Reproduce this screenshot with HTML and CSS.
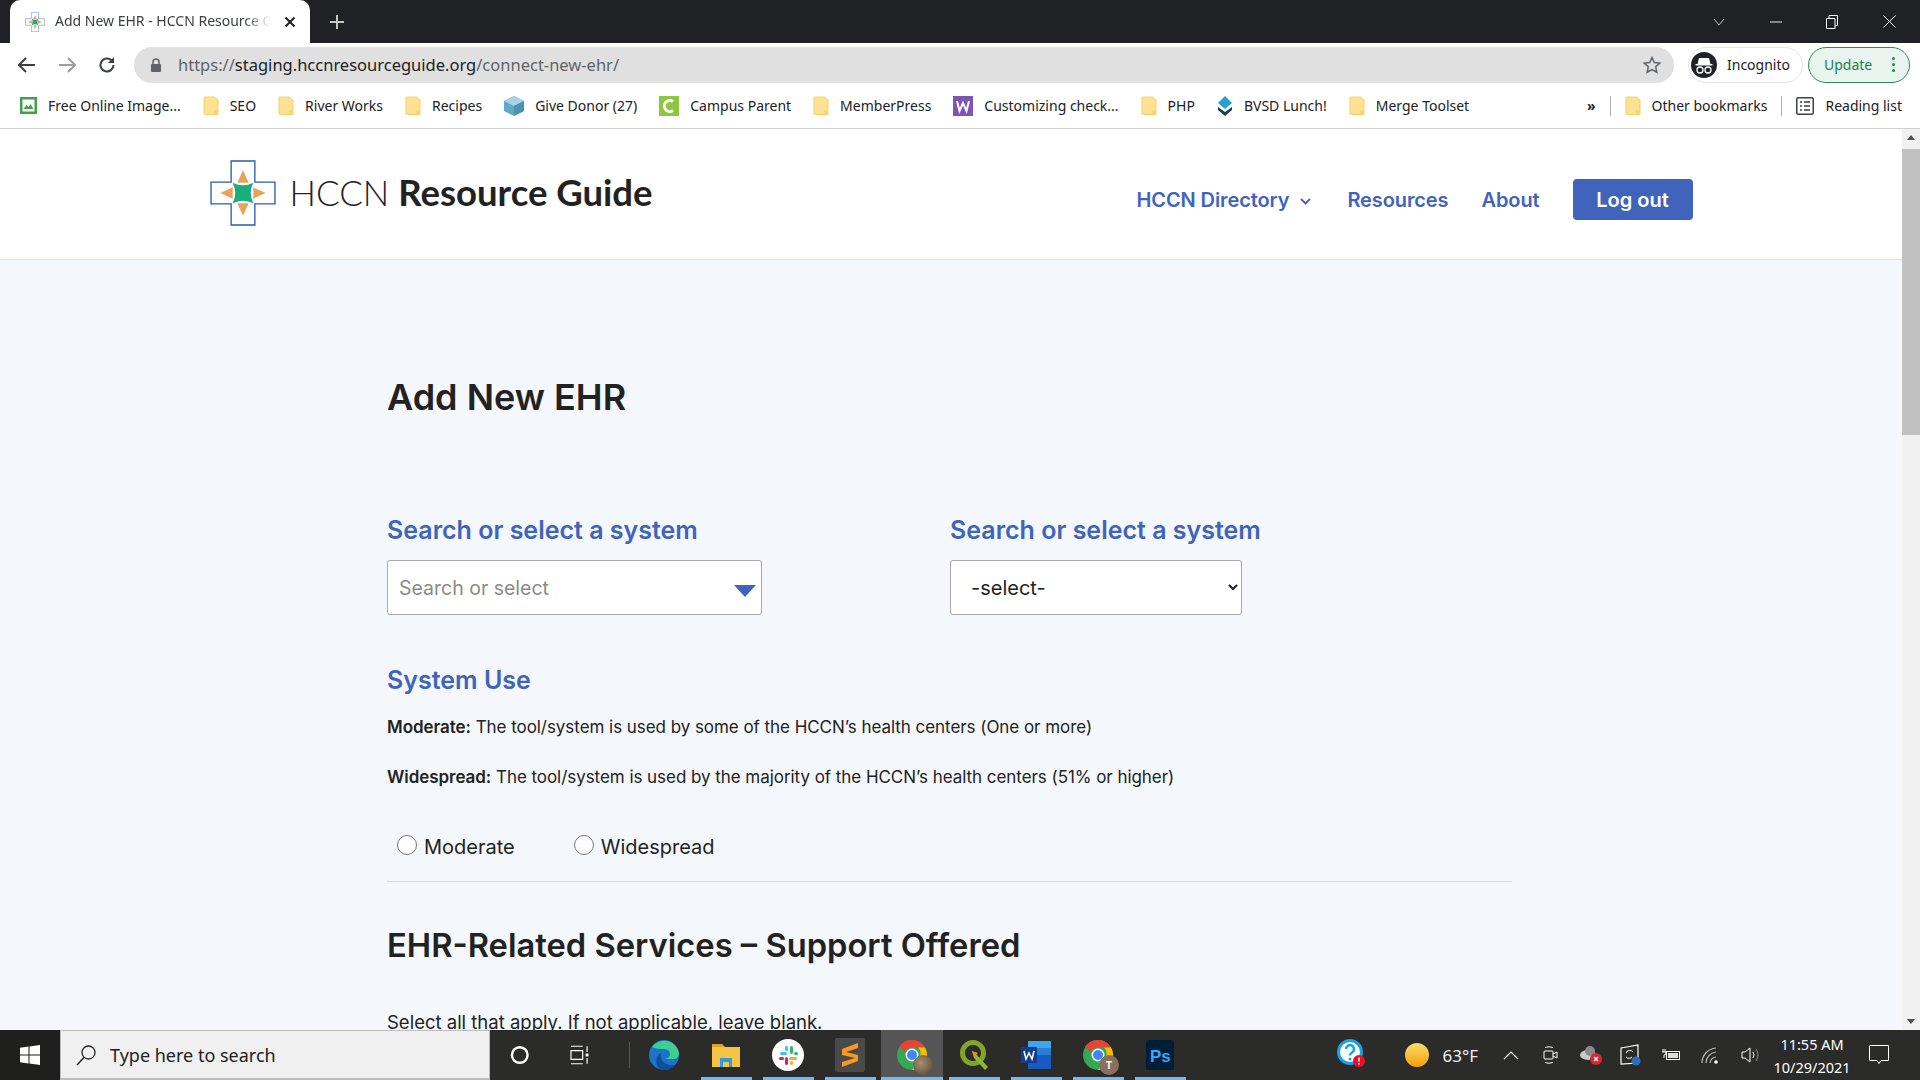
FILE: index.html
```html
<!DOCTYPE html>
<html lang="en">
<head>
  <meta charset="UTF-8" />
  <title>Add New EHR - HCCN Resource Guide</title>
  <link rel="stylesheet" href="styles.css">
</head>
<body>
  <svg class="defs" width="0" height="0">
    <symbol id="folder" viewBox="0 0 16 20">
      <path d="M1 1h10.500l3.500 3v14.500H2.500a1.500 1.500 0 0 1-1.500-1.500z" fill="#fde293" stroke="#f5d06c" stroke-width="1"/>
      <path d="M11 14h4v4.500h-4z" fill="#f7d774"/>
    </symbol>
    <symbol id="logo" viewBox="0 0 64 64">
      <path d="M20.500 1h23v20.500H63v21H43.500V63h-23V42.500H1v-21h19.500z" fill="#fff" stroke="#2a5bb5" stroke-width="1.300"/>
      <path d="M32 10l5.500 12h-11zM32 54l-5.500-12h11zM10 32l12-5.500v11zM54 32l-12 5.500v-11z" fill="#e8a35a"/>
      <path d="M22 22q10 5 20 0q-5 10 0 20q-10-5-20 0q5-10 0-20z" fill="#17b07b"/>
    </symbol>
    <symbol id="chrome" viewBox="0 0 32 32">
      <circle cx="16" cy="16" r="15" fill="#34a853"/>
      <path d="M16 1a15 15 0 0 1 13 7.500H16a7.500 7.500 0 0 0-7 4.500L3 8a15 15 0 0 1 13-7z" fill="#ea4335"/>
      <path d="M29 8.500A15 15 0 0 1 16 31l6.500-11.500A7.500 7.500 0 0 0 22 8.500z" fill="#fbbc05"/>
      <circle cx="16" cy="16" r="6.500" fill="#fff"/>
      <circle cx="16" cy="16" r="5" fill="#4285f4"/>
    </symbol>
  </svg>

  <div class="tabstrip">
    <div class="tab">
      <svg class="favicon" width="20" height="20"><use href="#logo"/></svg>
      <span class="tab-title">Add New EHR - HCCN Resource Guide</span>
      <svg class="tab-close" width="12" height="12" viewBox="0 0 12 12"><path d="M1.500 1.500l9 9M10.500 1.500l-9 9" stroke="#202124" stroke-width="2"/></svg>
    </div>
    <svg class="tab-new" width="16" height="16" viewBox="0 0 16 16"><path d="M8 1v14M1 8h14" stroke="#c4c7c5" stroke-width="2"/></svg>
    <div class="win-controls">
      <svg width="12" height="8" viewBox="0 0 12 8"><path d="M1 1l5 6 5-6" fill="none" stroke="#bdc1c6"/></svg>
      <svg width="12" height="2" viewBox="0 0 12 2"><path d="M0 1h12" stroke="#e8eaed"/></svg>
      <svg width="12" height="14" viewBox="0 0 12 14"><path d="M.5 3.500h8.500v10H.5zM3 3.500V.5h8.500v10H9" fill="none" stroke="#fff"/></svg>
      <svg width="13" height="13" viewBox="0 0 13 13"><path d="M.5.500l12 12M12.500.500l-12 12" stroke="#fff"/></svg>
    </div>
  </div>

  <div class="toolbar">
    <svg width="18" height="16" viewBox="0 0 18 16"><path d="M8 1L1 8l7 7M1 8h16" fill="none" stroke="#3c4043" stroke-width="2"/></svg>
    <svg width="18" height="16" viewBox="0 0 18 16"><path d="M10 1l7 7-7 7M17 8H1" fill="none" stroke="#9aa0a6" stroke-width="2"/></svg>
    <svg width="18" height="18" viewBox="0 0 18 18"><path d="M15.500 9A6.500 6.500 0 1 1 13.500 4.300" fill="none" stroke="#3c4043" stroke-width="2"/><path d="M16 1v6h-6z" fill="#3c4043"/></svg>
    <div class="urlbar">
      <svg width="12" height="14" viewBox="0 0 12 14"><path d="M3 6V4a3 3 0 0 1 6 0v2" fill="none" stroke="#5f6368" stroke-width="1.500"/><rect x="1" y="6" width="10" height="8" rx="1" fill="#5f6368"/></svg>
      <span class="url"><span class="url-dim">https://</span>staging.hccnresourceguide.org<span class="url-dim">/connect-new-ehr/</span></span>
      <svg class="url-star" width="18" height="18" viewBox="0 0 18 18"><path d="M9 1.500l2.300 5 5.400.600-4 3.700 1.100 5.400L9 13.500l-4.800 2.700 1.100-5.400-4-3.700 5.400-.600z" fill="none" stroke="#5f6368" stroke-width="1.500"/></svg>
    </div>
    <div class="pill-incognito">
      <svg width="26" height="26" viewBox="0 0 26 26"><circle cx="13" cy="13" r="13" fill="#202124"/><path d="M8 6h10l1.500 6h-13zM4.500 12h17v1.500h-17z" fill="#fff"/><circle cx="9" cy="18" r="3" fill="none" stroke="#fff" stroke-width="1.300"/><circle cx="17" cy="18" r="3" fill="none" stroke="#fff" stroke-width="1.300"/></svg>
      <span>Incognito</span>
    </div>
    <div class="pill-update">
      <span>Update</span>
      <span class="update-dots"><i></i><i></i><i></i></span>
    </div>
  </div>

  <div class="bookmarks">
    <a class="bm"><svg width="17" height="17" viewBox="0 0 17 17"><rect width="17" height="17" fill="#43a047"/><rect x="2.500" y="2.500" width="12" height="12" fill="#fff"/><path d="M3.500 12l3-4 2 2 2-3 3 5z" fill="#43a047"/></svg>Free Online Image...</a>
    <a class="bm"><svg width="16" height="20"><use href="#folder"/></svg>SEO</a>
    <a class="bm"><svg width="16" height="20"><use href="#folder"/></svg>River Works</a>
    <a class="bm"><svg width="16" height="20"><use href="#folder"/></svg>Recipes</a>
    <a class="bm"><svg width="20" height="20" viewBox="0 0 20 20"><path d="M10 0l10 5v10l-10 5L0 15V5z" fill="#5fa9c9"/><path d="M10 0l10 5-10 5L0 5z" fill="#a6d3e6"/><path d="M10 10l10-5v10l-10 5z" fill="#4b93b3"/></svg>Give Donor (27)</a>
    <a class="bm"><svg width="20" height="20" viewBox="0 0 20 20"><rect width="20" height="20" fill="#8dc63f"/><path d="M14 5.500a5.500 5.500 0 1 0 0 9" fill="none" stroke="#fff" stroke-width="3"/></svg>Campus Parent</a>
    <a class="bm"><svg width="16" height="20"><use href="#folder"/></svg>MemberPress</a>
    <a class="bm"><svg width="20" height="20" viewBox="0 0 20 20"><rect width="20" height="20" fill="#7f54b3"/><path d="M4 5l2.500 10L10 7l3.500 8L16 5" fill="none" stroke="#fff" stroke-width="2"/></svg>Customizing check...</a>
    <a class="bm"><svg width="16" height="20"><use href="#folder"/></svg>PHP</a>
    <a class="bm"><svg width="16" height="20" viewBox="0 0 16 20"><path d="M8 0l7 7-7 6-7-6z" fill="#2a9fd6"/><path d="M1 11l7 5 7-5v3l-7 6-7-6z" fill="#1c3d5a"/></svg>BVSD Lunch!</a>
    <a class="bm"><svg width="16" height="20"><use href="#folder"/></svg>Merge Toolset</a>
    <div class="bm-right">
      <span class="bm-more">»</span>
      <span class="bm-sep"></span>
      <a class="bm"><svg width="16" height="20"><use href="#folder"/></svg>Other bookmarks</a>
      <span class="bm-sep"></span>
      <a class="bm"><svg width="18" height="18" viewBox="0 0 18 18"><rect x=".75" y=".75" width="16.500" height="16.500" rx="1.500" fill="none" stroke="#3c4043" stroke-width="1.500"/><path d="M4 5h2M4 9h2M4 13h2M8 5h6M8 9h6M8 13h6" stroke="#3c4043" stroke-width="1.500"/></svg>Reading list</a>
    </div>
  </div>

  <div class="viewport">
    <div class="page">
      <header class="site-header">
        <div class="site-header-inner">
          <a class="brand">
            <svg width="66" height="66"><use href="#logo"/></svg>
            <span class="brand-text"><span class="brand-light">HCCN</span> <strong>Resource Guide</strong></span>
          </a>
          <nav class="nav">
            <a class="nav-dropdown">HCCN Directory<svg class="nav-chevron" width="11" height="7" viewBox="0 0 11 7"><path d="M1 1l4.500 4.500L10 1" fill="none" stroke="#4064bb" stroke-width="1.800"/></svg></a>
            <a>Resources</a>
            <a>About</a>
            <button class="btn-logout">Log out</button>
          </nav>
        </div>
      </header>

      <main class="content">
        <h1>Add New EHR</h1>

        <div class="system-row">
          <div class="system-col">
            <h3>Search or select a system</h3>
            <div class="combo">
              <input type="text" placeholder="Search or select" />
              <span class="combo-arrow"></span>
            </div>
          </div>
          <div class="system-col">
            <h3>Search or select a system</h3>
            <select class="system-select">
              <option>-select-</option>
            </select>
          </div>
        </div>

        <h3 class="use-title">System Use</h3>
        <p><strong>Moderate:</strong> The tool/system is used by some of the HCCN’s health centers (One or more)</p>
        <p><strong>Widespread:</strong> The tool/system is used by the majority of the HCCN’s health centers (51% or higher)</p>

        <div class="radios">
          <label><input type="radio" name="use" /> Moderate</label>
          <label><input type="radio" name="use" /> Widespread</label>
        </div>
        <hr />

        <h2>EHR-Related Services – Support Offered</h2>
        <p class="hint">Select all that apply. If not applicable, leave blank.</p>
      </main>
    </div>
    <div class="scrollbar">
      <span class="sb-up"></span>
      <span class="sb-thumb"></span>
      <span class="sb-down"></span>
    </div>
  </div>

  <footer class="taskbar">
    <div class="start">
      <svg width="20" height="20" viewBox="0 0 20 20"><path d="M0 2.800l8.500-1.200v8H0zM9.500 1.400L20 0v9.600H9.500zM0 10.500h8.500v8L0 17.300zM9.500 10.500H20V20L9.500 18.600z" fill="#fff"/></svg>
    </div>
    <div class="task-search">
      <svg width="22" height="22" viewBox="0 0 22 22"><circle cx="13.500" cy="8.500" r="6.500" fill="none" stroke="#222" stroke-width="1.300"/><path d="M9 13.500L2 21" stroke="#222" stroke-width="1.500"/></svg>
      <span>Type here to search</span>
    </div>
    <div class="task-sys">
      <svg width="20" height="20" viewBox="0 0 20 20"><circle cx="10" cy="10" r="8" fill="none" stroke="#fff" stroke-width="2.500"/></svg>
      <svg width="20" height="20" viewBox="0 0 20 20"><path d="M1 1h12M1 19h12M1 5.500h12v9H1zM17.500 1v6M17.500 13v6" fill="none" stroke="#fff" stroke-width="1.200"/><rect x="16" y="8.500" width="3" height="3" fill="#fff"/></svg>
      <span class="task-sep"></span>
    </div>
    <div class="task-edge">
      <svg width="32" height="32" viewBox="0 0 32 32"><circle cx="16" cy="16" r="15" fill="#1b74c9"/><path d="M4 8A15 15 0 0 1 31 14q0 6-6 6H17q5-1 5-5 0-5-7-5-7 0-11-2z" fill="#3fce8f"/><path d="M14 31C7 28 6 18 13 14q-2 9 8 12 4 1 7-1-5 7-14 6z" fill="#104e99"/></svg>
    </div>
    <div class="task-apps">
      <div class="app on">
        <svg width="30" height="28" viewBox="0 0 30 28"><path d="M1 3h10l3 3h15v20H1z" fill="#f6c445"/><path d="M1 3h10l2 3H1z" fill="#e0a225"/><path d="M9 17h12v9h-3v-5h-6v5H9z" fill="#2f9ae8"/></svg>
      </div>
      <div class="app on">
        <svg width="32" height="32" viewBox="0 0 32 32"><circle cx="16" cy="16" r="16" fill="#fff"/><rect x="8" y="13" width="7" height="3" rx="1.500" fill="#36c5f0"/><rect x="13" y="7" width="3" height="5" rx="1.500" fill="#36c5f0"/><rect x="18" y="7" width="3" height="8" rx="1.500" fill="#2eb67d"/><rect x="22" y="13" width="4" height="3" rx="1.500" fill="#2eb67d"/><rect x="17" y="18" width="8" height="3" rx="1.500" fill="#ecb22e"/><rect x="18" y="22" width="3" height="4" rx="1.500" fill="#ecb22e"/><rect x="13" y="18" width="3" height="8" rx="1.500" fill="#e01e5a"/><rect x="7" y="18" width="5" height="3" rx="1.500" fill="#e01e5a"/></svg>
      </div>
      <div class="app on">
        <svg width="30" height="34" viewBox="0 0 30 34"><rect width="30" height="34" rx="2" fill="#4a4a4a"/><path d="M23 5L7 11v6l13 3-13 4v5l16-6v-6L11 14l12-4z" fill="#f89820"/></svg>
      </div>
      <div class="app on active">
        <svg width="32" height="32"><use href="#chrome"/></svg>
        <span class="profile-badge badge-photo"></span>
      </div>
      <div class="app on">
        <svg width="30" height="32" viewBox="0 0 30 32"><circle cx="14" cy="14" r="10.500" fill="none" stroke="#7fa727" stroke-width="5"/><path d="M13 12l4 3 12 13-3 3-11-12z" fill="#8cb63c"/><path d="M13 12l6 2-4 4z" fill="#f08a24"/></svg>
      </div>
      <div class="app on">
        <svg width="30" height="30" viewBox="0 0 30 30"><path d="M7 1h23v28H7z" fill="#185abd"/><path d="M7 1h23v7H7z" fill="#41a5ee"/><path d="M7 8h23v7H7z" fill="#2b7cd3"/><rect y="7" width="16" height="16" rx="1" fill="#103f91"/><path d="M3 11l2 8 3-6 3 6 2-8" fill="none" stroke="#fff" stroke-width="1.500"/></svg>
      </div>
      <div class="app on">
        <svg width="32" height="32"><use href="#chrome"/></svg>
        <span class="profile-badge">T</span>
      </div>
      <div class="app on">
        <svg width="28" height="30" viewBox="0 0 28 30"><rect width="28" height="30" rx="3" fill="#001e36"/><text x="4" y="22" font-family="Liberation Sans, sans-serif" font-size="17" font-weight="700" fill="#31a8ff">Ps</text></svg>
      </div>
    </div>

    <div class="tray">
      <div class="tray-help">
        <svg width="28" height="28" viewBox="0 0 28 28"><circle cx="13" cy="13" r="11.500" fill="#fff" stroke="#1ba1e2" stroke-width="3"/><path d="M9 10a4 4 0 1 1 6 3.500q-2 1-2 3" fill="none" stroke="#1ba1e2" stroke-width="2.500"/><circle cx="13" cy="20" r="1.500" fill="#1ba1e2"/><circle cx="22" cy="22" r="6" fill="#e81123"/><path d="M22 18.500v4M22 24v1.500" stroke="#fff" stroke-width="1.500"/></svg>
      </div>
      <svg class="tray-sun" width="24" height="24" viewBox="0 0 24 24"><defs><linearGradient id="sun" x1="0" y1="0" x2="0" y2="1"><stop offset="0" stop-color="#f8dd6c"/><stop offset="1" stop-color="#f59e0b"/></linearGradient></defs><circle cx="12" cy="12" r="12" fill="url(#sun)"/></svg>
      <span class="tray-temp">63°F</span>
      <div class="tray-icons">
        <svg width="16" height="10" viewBox="0 0 16 10"><path d="M1 9l7-7 7 7" fill="none" stroke="#fff" stroke-width="1.200"/></svg>
        <svg width="16" height="18" viewBox="0 0 16 18"><path d="M2 1.500q4-1.500 8 0M2 16.500q4 1.500 8 0" fill="none" stroke="#fff"/><rect x="1" y="5" width="9" height="8" rx="1" fill="none" stroke="#fff"/><path d="M10 8l4-2v6l-4-2" fill="none" stroke="#fff"/></svg>
        <svg width="24" height="20" viewBox="0 0 24 20"><ellipse cx="9" cy="10" rx="8" ry="5" fill="#c9c9c9"/><circle cx="11" cy="6" r="5" fill="#8a8a8a"/><circle cx="17" cy="14" r="6" fill="#d92632"/><path d="M15 12l4 4M19 12l-4 4" stroke="#fff" stroke-width="1.300"/></svg>
        <svg width="22" height="22" viewBox="0 0 22 22"><path d="M1 4l17-3v18l-17 1z" fill="none" stroke="#fff" stroke-width="1.200"/><path d="M6 9a4 4 0 0 1 7-1M12 13a4 4 0 0 1-6 0" fill="none" stroke="#fff"/><circle cx="16" cy="17" r="4.500" fill="#2a6fbb"/></svg>
        <svg width="20" height="14" viewBox="0 0 20 14"><rect x="5.500" y="3.500" width="13" height="8" fill="none" stroke="#fff"/><rect x="7" y="5" width="10" height="5" fill="#ddd"/><path d="M2 1v3M4 1v3M1 4h4v2l-2 1v3" fill="none" stroke="#fff"/></svg>
        <svg width="20" height="18" viewBox="0 0 20 18"><path d="M1 17A15 15 0 0 1 15 2M5 17A11 11 0 0 1 15 6M9 17a7 7 0 0 1 6-6" fill="none" stroke="#bbb" stroke-width="1.200"/><circle cx="15" cy="16" r="1.800" fill="#fff"/></svg>
        <svg width="20" height="18" viewBox="0 0 20 18"><path d="M1 6h3l5-4v14l-5-4H1z" fill="none" stroke="#fff"/><path d="M12 6q2 3 0 6" fill="none" stroke="#fff"/><path d="M15 3q4 6 0 12" fill="none" stroke="#888"/></svg>
      </div>
      <div class="clock"><span>11:55 AM</span><span>10/29/2021</span></div>
      <svg class="tray-note" width="20" height="20" viewBox="0 0 20 20"><path d="M.5.500h19v15H12l-2 3-2-3H.5z" fill="none" stroke="#fff"/></svg>
    </div>
  </footer>
</body>
</html>
```

FILE: styles.css
```css
* {
  box-sizing: border-box;
}

html, body {
  margin: 0;
  height: 100%;
  overflow: hidden;
}

body {
  display: flex;
  flex-direction: column;
  width: 1920px;
  height: 1080px;
  font-family: "Noto Sans", sans-serif;
  background: #f4f7fc;
}

.defs {
  position: absolute;
}

/* Ventana del navegador */
.tabstrip {
  height: 43px;
  flex: none;
  display: flex;
  align-items: center;
  background: #202124;
  padding-left: 10px;
}

.tab {
  width: 300px;
  height: 43px;
  display: flex;
  align-items: center;
  background: #fff;
  border-radius: 10px 10px 0 0;
  padding: 0 14px 0 15px;
  color: #3c4043;
  font-size: 14px;
  white-space: nowrap;
}

.tab-title {
  width: 216px;
  margin-left: 10px;
  padding-bottom: 2px;
  overflow: hidden;
  -webkit-mask-image: linear-gradient(to right, #000 88%, transparent 100%);
  mask-image: linear-gradient(to right, #000 88%, transparent 100%);
}

.tab-close {
  margin-left: auto;
}

.tab-new {
  margin-left: 19px;
}

.win-controls {
  margin-left: auto;
  display: flex;
  align-items: center;
  justify-content: space-between;
  width: 183px;
  margin-right: 24px;
}

.toolbar {
  height: 43px;
  flex: none;
  display: flex;
  align-items: center;
  gap: 22px;
  padding-left: 18px;
  background: #fff;
}

.urlbar {
  width: 1540px;
  height: 36px;
  margin-left: -4px;
  display: flex;
  align-items: center;
  gap: 16px;
  padding: 0 13px 0 16px;
  background: #e0e0e0;
  border-radius: 18px;
  font-size: 16.500px;
}

.url {
  color: #202124;
}

.url-dim {
  color: #5f6368;
}

.url-star {
  margin-left: auto;
}

.pill-incognito {
  width: 115px;
  height: 36px;
  margin-left: -8px;
  display: flex;
  align-items: center;
  gap: 10px;
  padding-left: 2px;
  border: 1px solid #e4e4e4;
  border-radius: 18px;
  font-size: 14px;
  color: #202124;
}

.pill-update {
  width: 102px;
  height: 36px;
  margin-left: -17px;
  display: flex;
  align-items: center;
  justify-content: space-between;
  padding: 0 14px 0 15px;
  border: 1.500px solid #2e8b57;
  border-radius: 18px;
  background: #eaf4ee;
  color: #1e7e45;
  font-size: 14px;
}

.update-dots {
  display: flex;
  flex-direction: column;
  gap: 3px;
}

.update-dots i {
  width: 3px;
  height: 3px;
  border-radius: 50%;
  background: #1e8e3e;
}

.bookmarks {
  height: 43px;
  flex: none;
  display: flex;
  align-items: center;
  gap: 22px;
  padding: 0 18px 3px 20px;
  background: #fff;
  border-bottom: 1px solid #d0d0d0;
  font-size: 14px;
  color: #202124;
}

.bm {
  display: flex;
  align-items: center;
  gap: 11px;
  white-space: nowrap;
}

.bm-right {
  margin-left: auto;
  display: flex;
  align-items: center;
  gap: 14px;
}

.bm-more {
  font-weight: 700;
}

.bm-sep {
  width: 1px;
  height: 20px;
  background: #b0b0b0;
}

/* Pagina */
.viewport {
  flex: 1;
  min-height: 0;
  display: flex;
}

.page {
  flex: 1;
  overflow: hidden;
}

.scrollbar {
  width: 18px;
  display: flex;
  flex-direction: column;
  align-items: center;
  background: #f1f1f1;
}

.sb-up, .sb-down {
  width: 0;
  height: 0;
  border-left: 4px solid transparent;
  border-right: 4px solid transparent;
  margin: 6px 0;
}

.sb-up {
  border-bottom: 5px solid #505050;
}

.sb-down {
  border-top: 5px solid #505050;
  margin-top: auto;
}

.sb-thumb {
  width: 100%;
  height: 286px;
  margin-top: 3px;
  background: #c1c1c1;
}

.site-header {
  height: 131px;
  background: #fff;
  border-bottom: 1px solid #dde3ea;
}

.site-header-inner {
  width: 1483px;
  margin: 0 auto;
  height: 100%;
  display: flex;
  align-items: center;
  justify-content: space-between;
}

.brand {
  display: flex;
  align-items: center;
  gap: 14px;
  margin-top: -2px;
}

.brand-text {
  margin-top: -3px;
  font-family: Lato, sans-serif;
  font-size: 35px;
  color: #222;
}

.brand-light {
  font-weight: 300;
}

.brand-text strong {
  font-size: 36.500px;
  font-weight: 700;
}

.nav {
  display: flex;
  align-items: center;
  gap: 33px;
  margin-top: 11px;
  font-family: Inter, sans-serif;
  font-size: 20px;
  font-weight: 600;
  letter-spacing: -0.1px;
  color: #4064bb;
}

.nav-dropdown {
  margin-right: 3px;
}

.nav-chevron {
  margin-left: 11px;
  vertical-align: 2px;
}

.btn-logout {
  width: 120px;
  height: 41px;
  background: #4064bb;
  color: #fff;
  border: none;
  border-radius: 4px;
  font: inherit;
}

.content {
  width: 1125px;
  margin-left: 387px;
  font-family: Inter, sans-serif;
  color: #222;
}

h1 {
  margin: 0;
  padding-top: 113px;
  font-size: 36px;
  line-height: 48px;
  font-weight: 600;
}

.system-row {
  display: flex;
  gap: 188px;
  margin-top: 92px;
}

.system-col h3, .use-title {
  margin: 0;
  font-size: 25px;
  line-height: 34px;
  font-weight: 600;
  color: #4064bb;
}

.combo {
  position: relative;
  width: 375px;
  margin-top: 13px;
}

.combo input {
  width: 100%;
  height: 55px;
  padding: 0 11px;
  border: 1px solid #a9a9a9;
  border-radius: 3px;
  background: #fff;
  font: 19.500px Inter, sans-serif;
}

.combo input::placeholder {
  color: #8a8a8a;
}

.combo-arrow {
  position: absolute;
  right: 6px;
  top: 25px;
  border-left: 11px solid transparent;
  border-right: 11px solid transparent;
  border-top: 12px solid #4064bb;
}

.system-select {
  display: block;
  width: 292px;
  height: 55px;
  margin-top: 13px;
  padding: 0 16px;
  border: 1px solid #a9a9a9;
  border-radius: 3px;
  background: #fff;
  color: #222;
  font: 20px Inter, sans-serif;
}

.use-title {
  margin-top: 48px;
}

p {
  margin: 0;
  font-size: 17px;
  line-height: 26px;
  letter-spacing: -0.05px;
}

.use-title + p {
  margin-top: 17px;
}

.use-title + p + p {
  margin-top: 24px;
}

p strong {
  font-weight: 600;
}

.radios {
  display: flex;
  gap: 59px;
  margin-top: 43px;
  padding-left: 10px;
  font-size: 20px;
  line-height: 28px;
}

.radios label {
  display: flex;
  align-items: center;
  gap: 7px;
}

.radios input {
  width: 20px;
  height: 20px;
  margin: -5px 0 0;
}

hr {
  margin: 20px 0 0;
  border: none;
  border-top: 1px solid #d5d9de;
}

h2 {
  margin: 42px 0 0;
  font-size: 32.700px;
  line-height: 42px;
  font-weight: 600;
}

p.hint {
  margin-top: 43px;
  font-size: 18.500px;
  letter-spacing: 0;
}

/* Barra de tareas */
.taskbar {
  height: 50px;
  flex: none;
  display: flex;
  align-items: stretch;
  background: #2b2b29;
  color: #fff;
}

.start {
  width: 60px;
  display: flex;
  align-items: center;
  justify-content: center;
  background: #1f1f1d;
}

.task-search {
  width: 430px;
  display: flex;
  align-items: center;
  gap: 13px;
  padding-left: 14px;
  background: #f0f0f0;
  border: 1px solid #bdbdbd;
  border-bottom-width: 2px;
  color: #222;
  font-size: 18px;
}

.task-sys {
  width: 140px;
  display: flex;
  align-items: center;
  gap: 40px;
  padding-left: 20px;
}

.task-sep {
  width: 1px;
  height: 26px;
  background: #555;
}

.task-edge {
  width: 65px;
  display: flex;
  align-items: center;
  padding-left: 18px;
}

.task-apps {
  display: flex;
}

.app {
  position: relative;
  width: 62px;
  display: flex;
  align-items: center;
  justify-content: center;
}

.app.on::after {
  content: "";
  position: absolute;
  left: 6px;
  right: 5px;
  bottom: 0;
  height: 3px;
  background: #76b9ed;
}

.app.active {
  background: #555;
}

.app.active::after {
  left: 0;
  right: 0;
}

.profile-badge {
  position: absolute;
  left: 32px;
  top: 25px;
  width: 20px;
  height: 20px;
  border-radius: 50%;
  background: #8a6f5f;
  color: #eee;
  font-size: 11px;
  font-weight: 700;
  text-align: center;
  line-height: 20px;
}

.badge-photo {
  background: radial-gradient(circle at 40% 40%, #a89070, #4a4030);
}

.tray {
  margin-left: auto;
  display: flex;
  align-items: center;
  padding-right: 31px;
}

.tray-temp {
  margin-left: 13px;
  font-size: 17px;
  color: #eee;
}

.tray-sun {
  margin-left: 40px;
}

.tray-icons {
  display: grid;
  grid-auto-flow: column;
  grid-auto-columns: 40px;
  justify-items: center;
  align-items: center;
  margin-left: 13px;
}

.clock {
  width: 76px;
  display: flex;
  flex-direction: column;
  align-items: center;
  gap: 3px;
  margin-left: 3px;
  font-size: 14.500px;
  line-height: 20px;
}

.tray-note {
  margin-left: 19px;
}
```
